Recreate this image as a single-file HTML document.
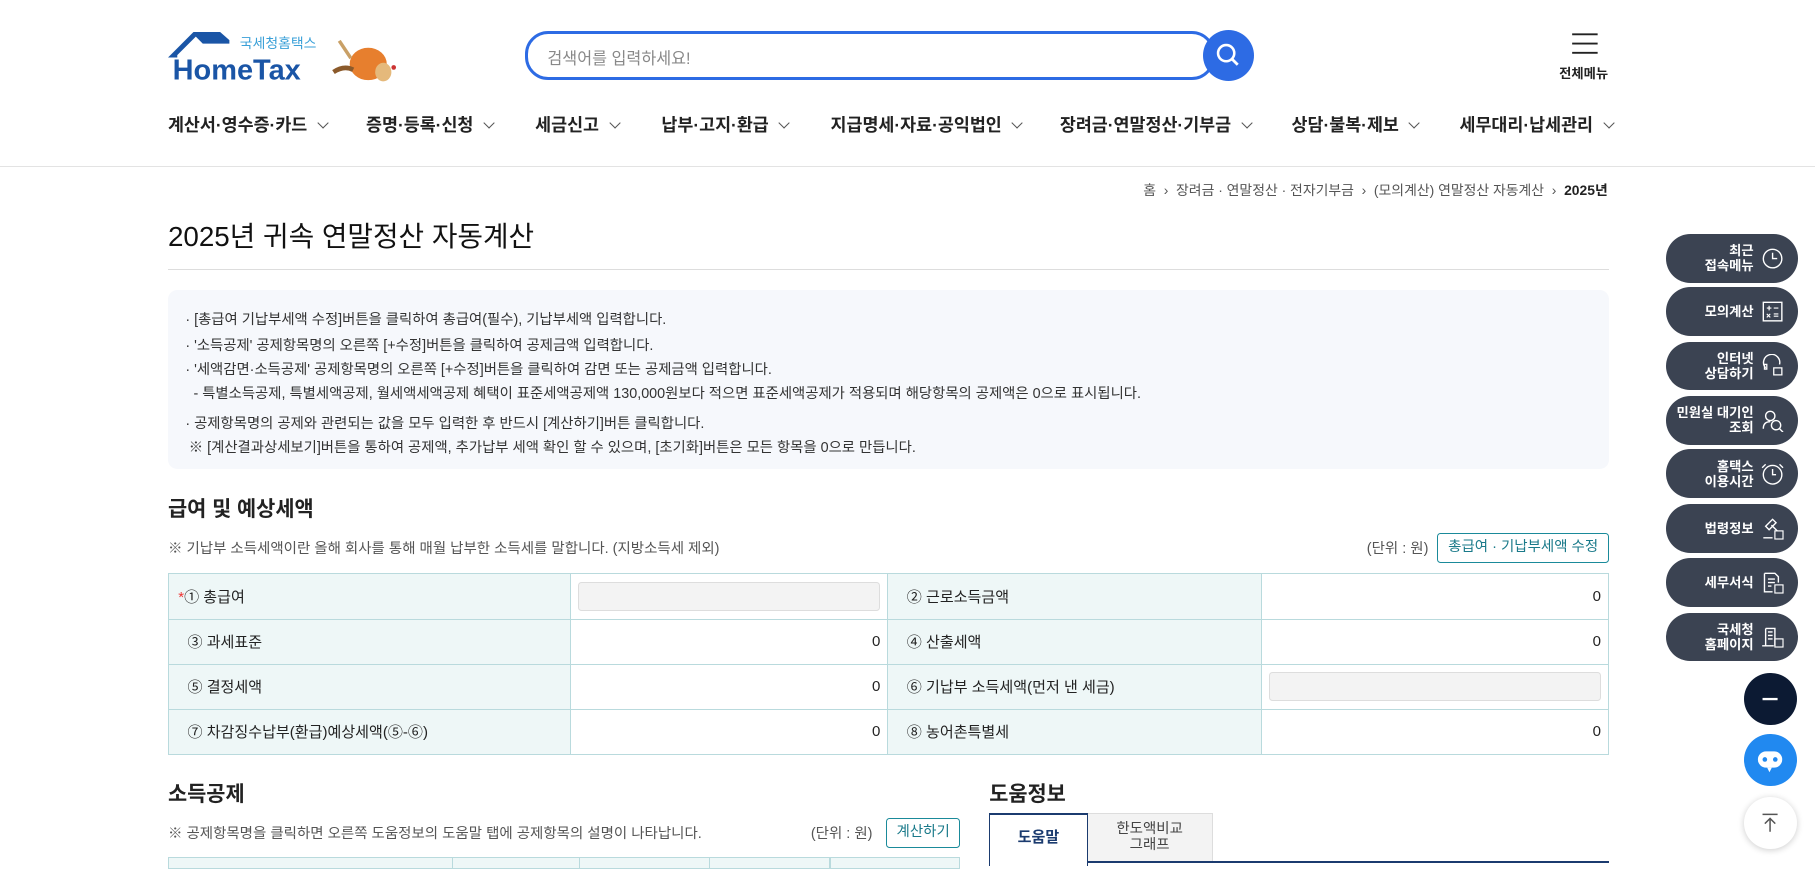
<!DOCTYPE html>
<html><head><meta charset="utf-8"><style>
html{zoom:1.15831}
*{margin:0;padding:0;box-sizing:border-box}
body{width:1567px;height:747px;overflow:hidden;background:#fff;font-family:"Liberation Sans","Noto Sans CJK KR",sans-serif;color:#222;position:relative}
.a{position:absolute;white-space:nowrap}
.nav{top:97px;font-size:15px;font-weight:700;color:#222}
.nav span{display:inline-block;width:7px;height:7px;border-right:1.6px solid #555;border-bottom:1.6px solid #555;transform:rotate(45deg);margin-left:10px;position:relative;top:-4px}
.info{font-size:12.4px;color:#333}
table{border-collapse:collapse;position:absolute;left:145px;top:495px;width:1244px;font-size:13px}
td{border:1px solid #b9dadd;height:39px;padding:0 16px}
td.l{background:#eef7f7}
td.v{text-align:right;padding-right:6px;background:#fff}
.inp{height:25px;background:#f3f3f3;border:1px solid #ddd;border-radius:3px}
.sb{position:absolute;left:1438px;width:114px;height:42px;border-radius:21px;background:#3b4352;color:#fff;font-size:11.5px;font-weight:700;text-align:right;padding-right:38px;line-height:13px;display:flex;align-items:center;justify-content:flex-end}
.sb svg{position:absolute;right:12px;top:11px}
.c{position:absolute;left:1506px;width:45px;height:45px;border-radius:50%}
</style></head><body>
<svg class="a" style="left:145px;top:28px" width="135" height="44" viewBox="0 0 135 44">
<path d="M0 22 L22 0 L45 0 L53 7 L53 10 L30 10 L24 4 L8 20 L8 22Z" fill="#1a55a6"/>
<text x="4" y="41" font-family="Liberation Sans" font-weight="700" font-size="25" fill="#1a55a6">HomeTax</text>
<text x="62" y="14" font-family="Noto Sans CJK KR" font-size="12" fill="#3aa0d8">국세청홈택스</text>
</svg>
<svg class="a" style="left:285px;top:30px" width="62" height="42"><ellipse cx="33" cy="25" rx="16" ry="14" fill="#e77f2e"/><ellipse cx="46" cy="32" rx="7" ry="8" fill="#e5b97b"/><path d="M3 32 Q12 26 20 30" stroke="#8b5a2b" stroke-width="4" fill="none"/><path d="M8 5 L18 20" stroke="#c9a066" stroke-width="3"/><circle cx="55" cy="28" r="2" fill="#c33"/></svg>
<div class="a" style="left:453px;top:27px;width:596px;height:42px;border:3px solid #2d6be4;border-radius:20px;padding:9px 17px;font-size:14px;color:#888">검색어를 입력하세요!</div>
<div class="a" style="left:1039px;top:26px;width:44px;height:44px;border-radius:50%;background:#2d6be4"><svg width="44" height="44"><circle cx="20" cy="20" r="7" stroke="#fff" stroke-width="2.2" fill="none"/><path d="M25 25 L30 30" stroke="#fff" stroke-width="2.4"/></svg></div>
<svg class="a" style="left:1356px;top:28px" width="24" height="20"><path d="M1 2H23M1 10H23M1 18H23" stroke="#222" stroke-width="1.6"/></svg>
<div class="a" style="left:1346px;top:54px;font-size:11.5px;font-weight:700">전체메뉴</div>
<div class="a nav" style="left:145px">계산서·영수증·카드<span></span></div>
<div class="a nav" style="left:316px">증명·등록·신청<span></span></div>
<div class="a nav" style="left:462px">세금신고<span></span></div>
<div class="a nav" style="left:571px">납부·고지·환급<span></span></div>
<div class="a nav" style="left:717px">지급명세·자료·공익법인<span></span></div>
<div class="a nav" style="left:915px">장려금·연말정산·기부금<span></span></div>
<div class="a nav" style="left:1115px">상담·불복·제보<span></span></div>
<div class="a nav" style="left:1260px">세무대리·납세관리<span></span></div>
<div class="a" style="left:0;top:143px;width:1567px;height:1px;background:#e3e3e3"></div>
<div class="a" style="right:179px;top:155px;font-size:12px;color:#555">홈 &nbsp;›&nbsp; 장려금 · 연말정산 · 전자기부금 &nbsp;›&nbsp; (모의계산) 연말정산 자동계산 &nbsp;›&nbsp; <b style="color:#222">2025년</b></div>
<div class="a" style="left:145px;top:186px;font-size:24px;color:#111">2025년 귀속 연말정산 자동계산</div>
<div class="a" style="left:145px;top:232px;width:1244px;height:1px;background:#ddd"></div>
<div class="a" style="left:145px;top:250px;width:1244px;height:155px;background:#f6f8fc;border-radius:8px"></div>
<div class="a info" style="left:160px;top:266px">· [총급여 기납부세액 수정]버튼을 클릭하여 총급여(필수), 기납부세액 입력합니다.</div>
<div class="a info" style="left:160px;top:288px">· '소득공제' 공제항목명의 오른쪽 [+수정]버튼을 클릭하여 공제금액 입력합니다.</div>
<div class="a info" style="left:160px;top:309px">· '세액감면·소득공제' 공제항목명의 오른쪽 [+수정]버튼을 클릭하여 감면 또는 공제금액 입력합니다.</div>
<div class="a info" style="left:167px;top:330px">- 특별소득공제, 특별세액공제, 월세액세액공제 혜택이 표준세액공제액 130,000원보다 적으면 표준세액공제가 적용되며 해당항목의 공제액은 0으로 표시됩니다.</div>
<div class="a info" style="left:160px;top:356px">· 공제항목명의 공제와 관련되는 값을 모두 입력한 후 반드시 [계산하기]버튼 클릭합니다.</div>
<div class="a info" style="left:163px;top:376px">※ [계산결과상세보기]버튼을 통하여 공제액, 추가납부 세액 확인 할 수 있으며, [초기화]버튼은 모든 항목을 0으로 만듭니다.</div>
<div class="a" style="left:145px;top:426px;font-size:18px;font-weight:700">급여 및 예상세액</div>
<div class="a" style="left:145px;top:464px;font-size:12.5px;color:#555">※ 기납부 소득세액이란 올해 회사를 통해 매월 납부한 소득세를 말합니다. (지방소득세 제외)</div>
<div class="a" style="left:1180px;top:464px;font-size:12.5px;color:#555">(단위 : 원)</div>
<div class="a" style="left:1241px;top:460px;width:148px;height:26px;border:1px solid #1a8a9a;border-radius:3px;font-size:12.5px;color:#1a7a8a;text-align:center;line-height:24px">총급여 · 기납부세액 수정</div>
<table>
<colgroup><col style="width:347px"><col style="width:274px"><col style="width:323px"><col></colgroup>
<tr><td class="l"><span style="color:#e33;margin-left:-8px">*</span>① 총급여</td><td style="padding:0 6px"><div class="inp"></div></td><td class="l">② 근로소득금액</td><td class="v">0</td></tr>
<tr><td class="l">③ 과세표준</td><td class="v">0</td><td class="l">④ 산출세액</td><td class="v">0</td></tr>
<tr><td class="l">⑤ 결정세액</td><td class="v">0</td><td class="l">⑥ 기납부 소득세액(먼저 낸 세금)</td><td style="padding:0 6px"><div class="inp"></div></td></tr>
<tr><td class="l">⑦ 차감징수납부(환급)예상세액(⑤-⑥)</td><td class="v">0</td><td class="l">⑧ 농어촌특별세</td><td class="v">0</td></tr>
</table>
<div class="a" style="left:145px;top:672px;font-size:18px;font-weight:700">소득공제</div>
<div class="a" style="left:854px;top:672px;font-size:18px;font-weight:700">도움정보</div>
<div class="a" style="left:145px;top:710px;font-size:12.5px;color:#555">※ 공제항목명을 클릭하면 오른쪽 도움정보의 도움말 탭에 공제항목의 설명이 나타납니다.</div>
<div class="a" style="left:700px;top:710px;font-size:12.5px;color:#555">(단위 : 원)</div>
<div class="a" style="left:765px;top:706px;width:64px;height:26px;border:1px solid #1a8a9a;border-radius:3px;font-size:12.5px;color:#1a7a8a;text-align:center;line-height:24px">계산하기</div>
<div class="a" style="left:145px;top:740px;width:684px;height:10px;background:#eef7f7;border:1px solid #b9dadd"></div>
<div class="a" style="left:390px;top:740px;width:1px;height:10px;background:#b9dadd"></div>
<div class="a" style="left:500px;top:740px;width:1px;height:10px;background:#b9dadd"></div>
<div class="a" style="left:612px;top:740px;width:1px;height:10px;background:#b9dadd"></div>
<div class="a" style="left:716px;top:740px;width:1px;height:10px;background:#b9dadd"></div>
<div class="a" style="left:938px;top:702px;width:109px;height:42px;background:#f3f3f3;border:1px solid #ddd;font-size:12.5px;text-align:center;line-height:14px;padding-top:6px;color:#444">한도액비교<br>그래프</div>
<div class="a" style="left:938px;top:743px;width:451px;height:2px;background:#1b3b6f"></div>
<div class="a" style="left:854px;top:702px;width:85px;height:46px;background:#fff;border:1px solid #1b3b6f;border-top:2px solid #1b3b6f;border-bottom:none;font-size:13px;font-weight:700;color:#1b3b6f;text-align:center;line-height:40px">도움말</div>
<div class="sb" style="top:202px">최근<br>접속메뉴<svg width="20" height="20"><circle cx="10" cy="10" r="8" stroke="#fff" stroke-width="1.2" fill="none"/><path d="M10 5V10H14" stroke="#fff" stroke-width="1.2" fill="none"/></svg></div>
<div class="sb" style="top:248px">모의계산<svg width="20" height="20"><rect x="2" y="2" width="16" height="16" stroke="#fff" stroke-width="1.2" fill="none"/><path d="M5 7H9M7 5V9M11 7H15M5 12L8 15M8 12L5 15M11 12H15M11 14H15" stroke="#fff" stroke-width="1"/></svg></div>
<div class="sb" style="top:295px">인터넷<br>상담하기<svg width="20" height="20"><path d="M4 12 A7 7 0 1 1 16 9" stroke="#fff" stroke-width="1.2" fill="none"/><path d="M3 9V13H5V9ZM11 12H18V18H11Z" stroke="#fff" stroke-width="1.1" fill="none"/></svg></div>
<div class="sb" style="top:342px">민원실 대기인<br>조회<svg width="20" height="20"><circle cx="8" cy="6" r="4" stroke="#fff" stroke-width="1.2" fill="none"/><path d="M2 17 Q2 11 8 11" stroke="#fff" stroke-width="1.2" fill="none"/><circle cx="13" cy="14" r="4" stroke="#fff" stroke-width="1.2" fill="none"/><path d="M16 17L19 20" stroke="#fff" stroke-width="1.2"/></svg></div>
<div class="sb" style="top:388px">홈택스<br>이용시간<svg width="20" height="20"><circle cx="10" cy="11" r="8" stroke="#fff" stroke-width="1.2" fill="none"/><path d="M10 6V11H13M1 5L4 2M19 5L16 2" stroke="#fff" stroke-width="1.2" fill="none"/></svg></div>
<div class="sb" style="top:435px">법령정보<svg width="20" height="20"><path d="M4 8L10 2L13 5L7 11ZM9 7L14 12M2 18H10" stroke="#fff" stroke-width="1.2" fill="none"/><rect x="12" y="12" width="7" height="7" stroke="#fff" stroke-width="1" fill="none"/></svg></div>
<div class="sb" style="top:482px">세무서식<svg width="20" height="20"><path d="M3 2H12L15 5V10M3 2V18H10M6 7H12M6 10H12M6 13H9" stroke="#fff" stroke-width="1.2" fill="none"/><rect x="12" y="12" width="7" height="7" stroke="#fff" stroke-width="1" fill="none"/></svg></div>
<div class="sb" style="top:529px">국세청<br>홈페이지<svg width="20" height="20"><path d="M4 3H12V18M4 3V18M1 18H11M6 6H10M6 9H10M6 12H10" stroke="#fff" stroke-width="1.2" fill="none"/><rect x="12" y="12" width="7" height="7" stroke="#fff" stroke-width="1" fill="none"/></svg></div>
<div class="c" style="top:581px;background:#0c1a33"><svg width="45" height="45"><path d="M16 22.5H29" stroke="#fff" stroke-width="2"/></svg></div>
<div class="c" style="top:634px;background:#2189f0"><svg width="45" height="45"><rect x="12" y="15" width="21" height="14" rx="7" fill="#fff"/><circle cx="18" cy="22" r="2" fill="#2189f0"/><circle cx="27" cy="22" r="2" fill="#2189f0"/><path d="M20 29L22 33L24 29" fill="#fff"/></svg></div>
<div class="c" style="top:688px;background:#fff;box-shadow:0 1px 6px rgba(0,0,0,.2)"><svg width="45" height="45"><path d="M16 15H29M22.5 19V30M18 23L22.5 18.5L27 23" stroke="#555" stroke-width="1.3" fill="none"/></svg></div>
</body></html>
